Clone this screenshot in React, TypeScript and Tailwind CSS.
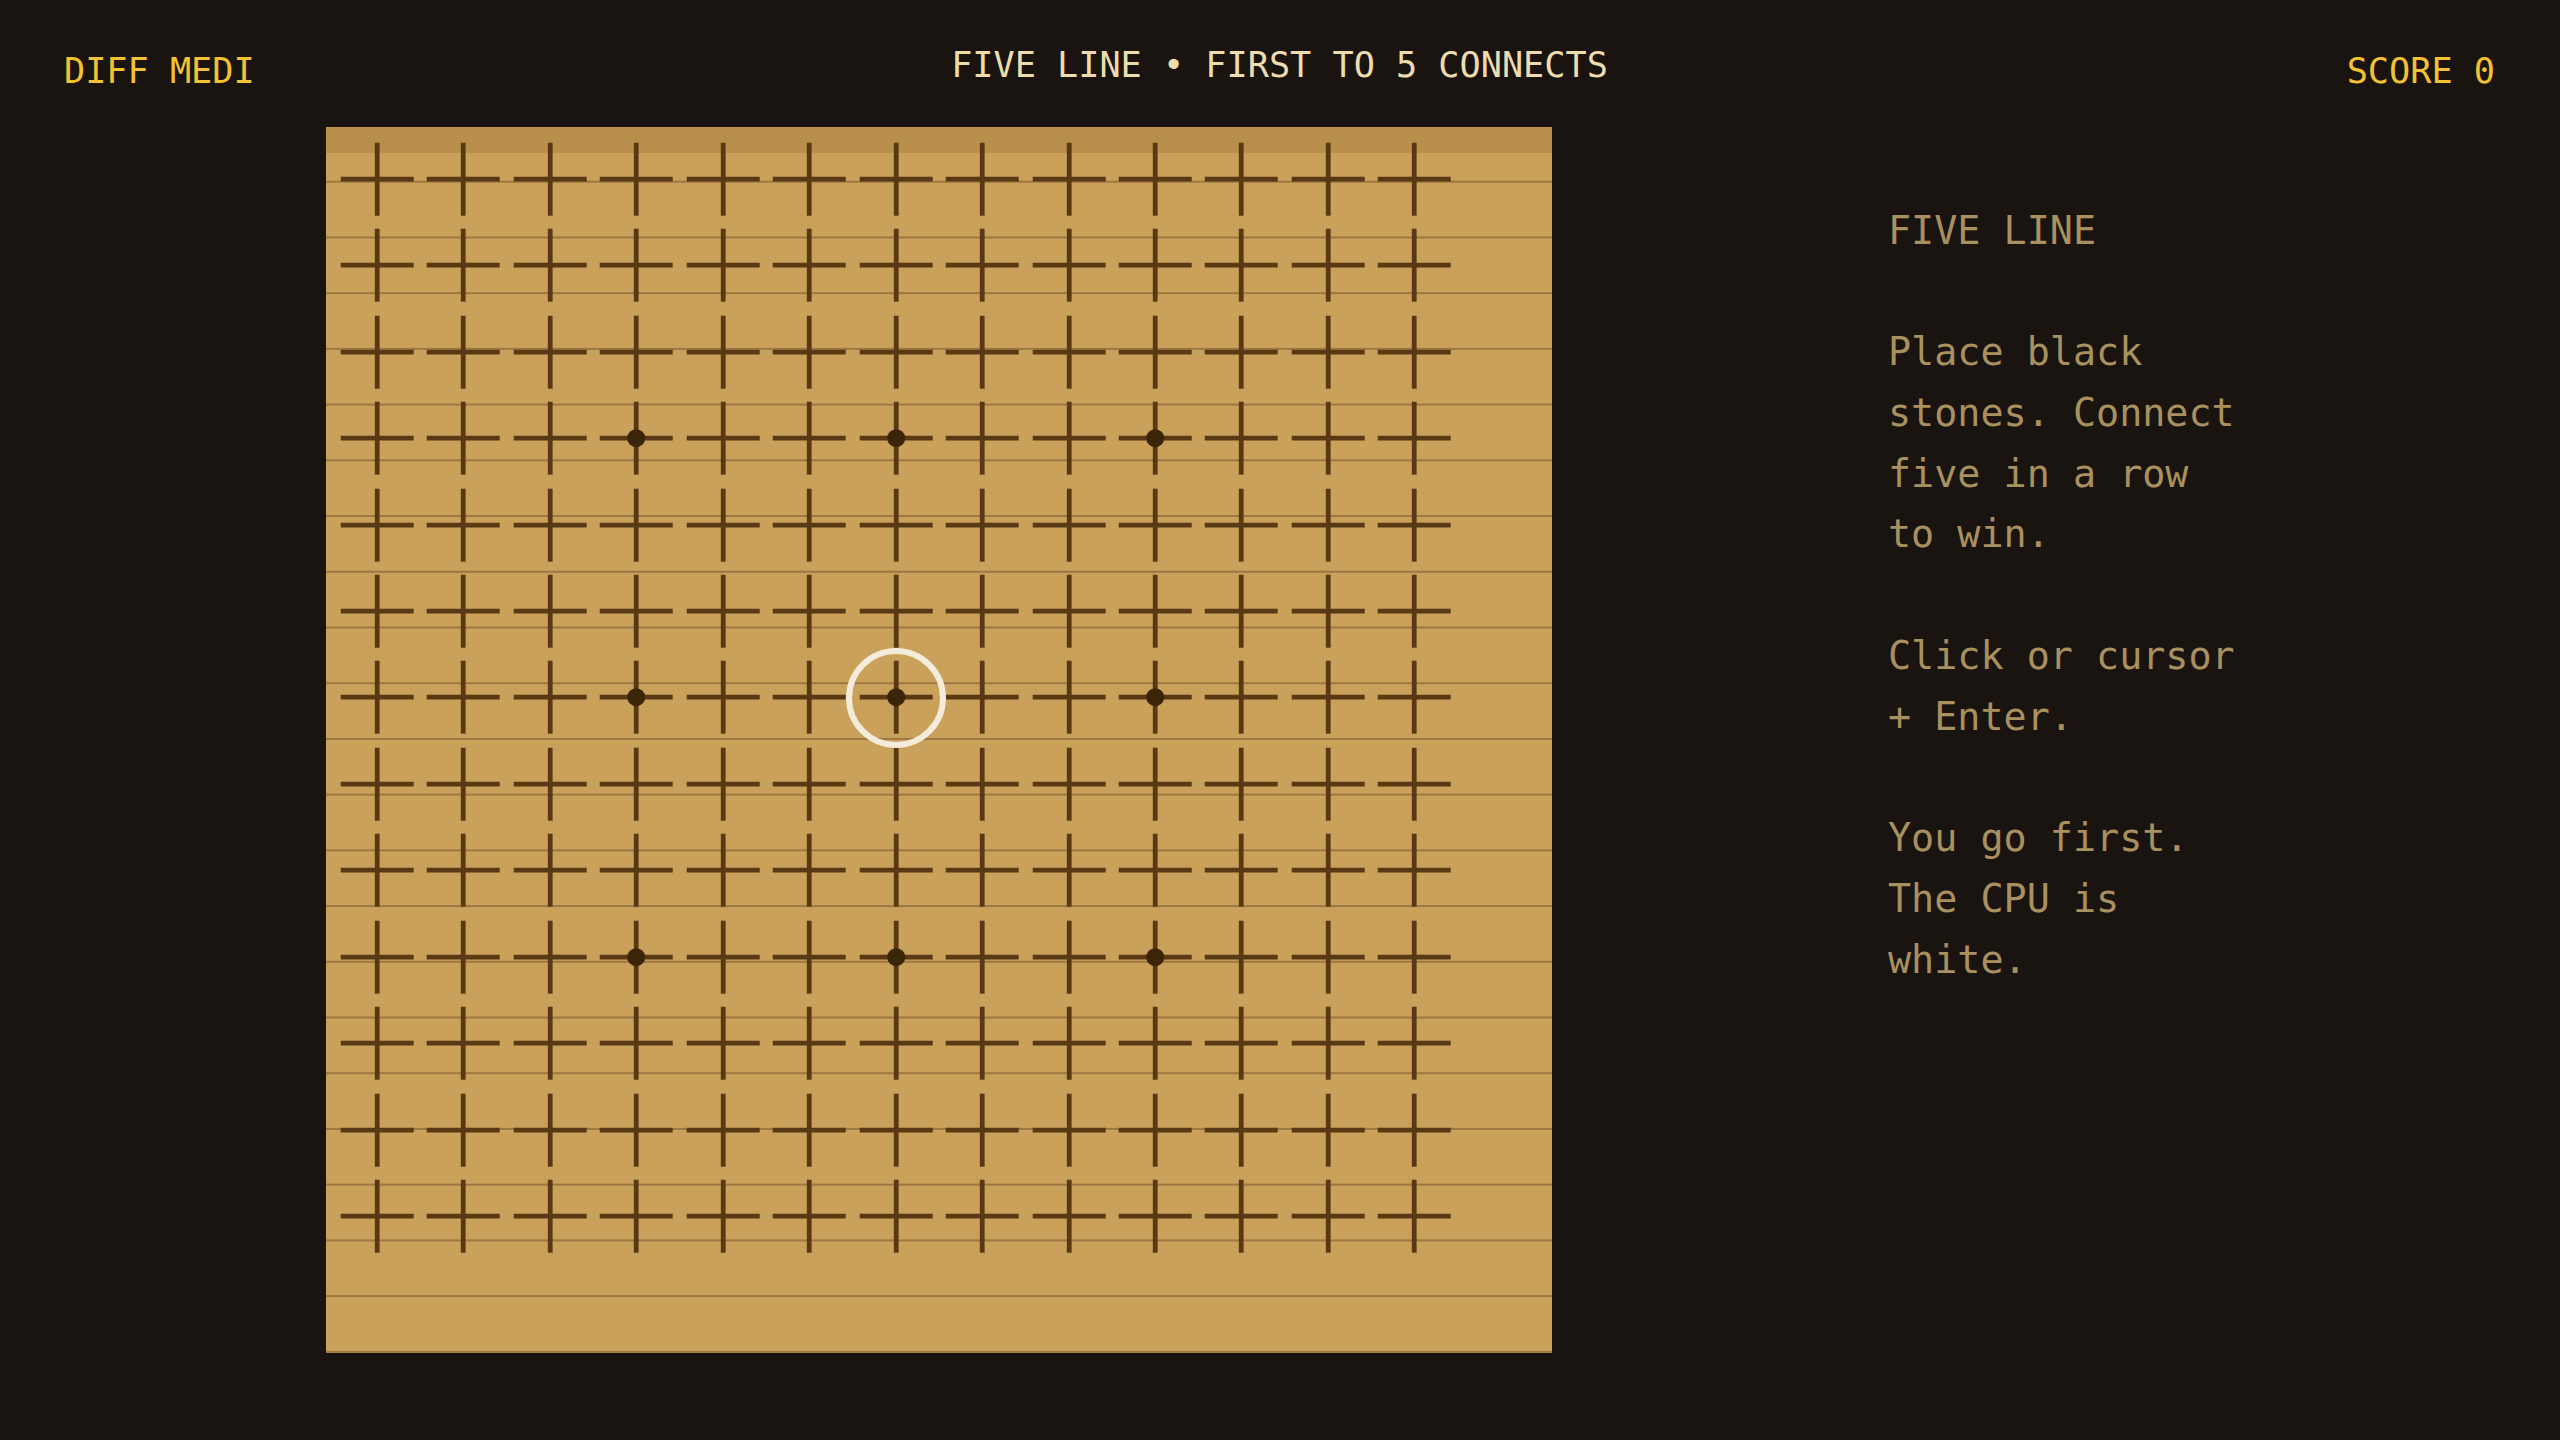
import React from "react";

const N = 13;
const CELL = 86.45;
const C = CELL / 2;
const HALF = 36.5;
const STAR = new Set(["3-3", "3-6", "3-9", "6-3", "6-6", "6-9", "9-3", "9-6", "9-9"]);

function Cell({ r, c }: { r: number; c: number }) {
  const star = STAR.has(`${r}-${c}`);
  const cursor = r === 6 && c === 6;
  return (
    <div className="relative flex items-center justify-center">
      <svg width={CELL} height={CELL} viewBox={`0 0 ${CELL} ${CELL}`} className="overflow-visible">
        <line x1={C - HALF} y1={C} x2={C + HALF} y2={C} stroke="#583913" strokeWidth={4.8} />
        <line x1={C} y1={C - HALF} x2={C} y2={C + HALF} stroke="#583913" strokeWidth={4.8} />
        {star && <circle cx={C} cy={C} r={9} fill="#3b2509" />}
      </svg>
      {cursor && (
        <div className="absolute left-1/2 top-1/2 z-10 h-[100px] w-[100px] -translate-x-1/2 -translate-y-1/2 rounded-full border-[6px] border-[#f4ecda]" />
      )}
    </div>
  );
}

export default function App() {
  const rows = Array.from({ length: N }, (_, i) => i);
  const sideLines = [
    "FIVE LINE",
    "",
    "Place black",
    "stones. Connect",
    "five in a row",
    "to win.",
    "",
    "Click or cursor",
    "+ Enter.",
    "",
    "You go first.",
    "The CPU is",
    "white.",
  ];
  return (
    <div className="min-h-[1440px] w-full bg-[#19140f] font-['DejaVu_Sans_Mono',monospace]">
      <header className="grid h-[127px] grid-cols-3 items-start pl-[64px] pr-[65px] pt-[47px]">
        <div className="mt-[6px] text-[35.2px] leading-none text-[#f2c232]">DIFF MEDI</div>
        <div className="whitespace-nowrap text-center text-[35.2px] leading-none text-[#ecdcae]">
          FIVE LINE • FIRST TO 5 CONNECTS
        </div>
        <div className="mt-[6px] text-right text-[35.2px] leading-none text-[#f2c232]">SCORE 0</div>
      </header>
      <main className="flex items-start pl-[326px]">
        <div className="h-[1226px] w-[1226px] shrink-0 bg-[#c9a15b] bg-[linear-gradient(to_bottom,#b98f4c_26px,transparent_26px),linear-gradient(to_bottom,transparent_53.5px,#9c7741_53.5px)] bg-size-[100%_100%,100%_55.73px] pl-[8px] pt-[8.8px]">
          <div className="grid grid-cols-[repeat(13,86.45px)] grid-rows-[repeat(13,86.45px)]">
            {rows.map((r) => rows.map((c) => <Cell key={`${r}-${c}`} r={r} c={c} />))}
          </div>
        </div>
        <aside className="ml-[336px] mt-[73.5px] text-[38.4px] leading-[60.8px] text-[#a8905f]">
          {sideLines.map((l, i) => (
            <div key={i} className="h-[60.8px] whitespace-pre">
              {l}
            </div>
          ))}
        </aside>
      </main>
    </div>
  );
}
